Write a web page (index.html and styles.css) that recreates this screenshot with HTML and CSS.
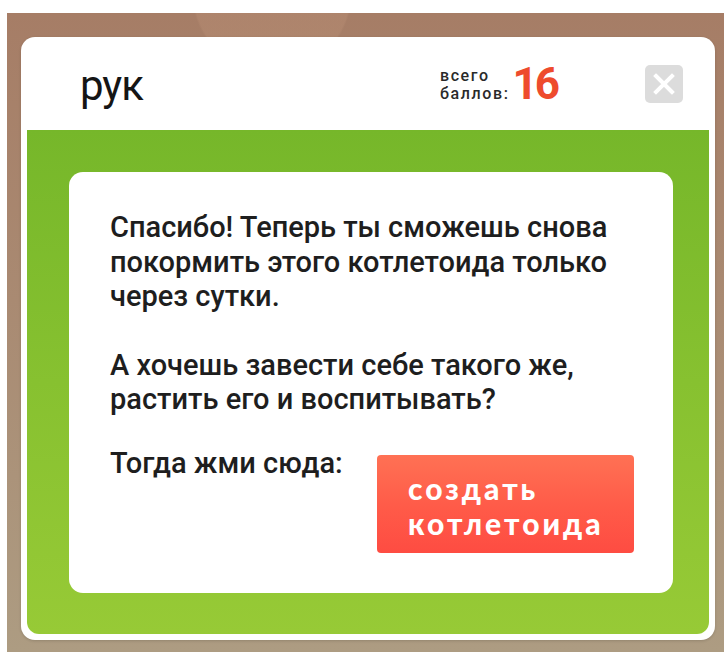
FILE: index.html
```html
<!DOCTYPE html>
<html lang="ru">
<head>
<meta charset="utf-8">
<title>рук</title>
<link rel="stylesheet" href="styles.css">
</head>
<body>
<div class="backdrop">
  <div class="modal">
    <header class="modal-head">
      <h1 class="name">рук</h1>
      <div class="score">
        <div class="score-label">
          <span class="score-line">всего</span>
          <span class="score-line">баллов:</span>
        </div>
        <span class="score-value">16</span>
      </div>
      <button class="close" type="button" aria-label="Закрыть">
        <svg viewBox="0 0 38 38" width="38" height="38"><path d="M11 11 L27 27 M27 11 L11 27" stroke="#fff" stroke-width="4" stroke-linecap="square"/></svg>
      </button>
    </header>
    <section class="panel">
      <div class="card">
        <p class="msg">Спасибо! Теперь ты сможешь снова<br>покормить этого котлетоида только<br>через сутки.</p>
        <p class="msg msg-last">А хочешь завести себе такого же,<br>растить его и воспитывать?</p>
        <div class="cta-row">
          <p class="msg">Тогда жми сюда:</p>
          <a class="create" href="#">создать<br>котлетоида</a>
        </div>
      </div>
    </section>
  </div>
</div>
</body>
</html>
```

FILE: styles.css
```css
html, body {
  margin: 0;
  padding: 0;
  background: #fff;
}

.backdrop {
  margin: 13px 0 0 7px;
  height: 639px;
  box-sizing: border-box;
  padding: 24px 9px 0 14px;
  background:
    radial-gradient(circle at 265px -20px, rgba(215,170,140,0.16) 0 78px, transparent 80px),
    linear-gradient(180deg, #a67d66 0%, #a98a72 45%, #ad9c82 100%);
  overflow: hidden;
}

.modal {
  width: 694px;
  height: 603px;
  background: #fff;
  border-radius: 14px;
  display: flex;
  flex-direction: column;
  box-shadow: 0 1px 3px rgba(0,0,0,0.15);
}

.modal-head {
  height: 93px;
  display: flex;
  align-items: center;
  padding: 0 32px 0 59px;
  font-family: Roboto, "Liberation Sans", sans-serif;
}

.name {
  margin: 0;
  padding-top: 4px;
  font-size: 42px;
  font-weight: 400;
  color: #151515;
  flex: 1;
  letter-spacing: -1px;
}

.score {
  display: flex;
  align-items: center;
  margin-right: 88px;
}

.score-label {
  display: flex;
  flex-direction: column;
}

.score-line {
  display: block;
  font-size: 16px;
  line-height: 19px;
  height: 18px;
  font-weight: 500;
  color: #2a2a2a;
  letter-spacing: 1.6px;
}

.score-value {
  font-size: 44px;
  font-weight: 700;
  color: #ee4b2d;
  letter-spacing: -3px;
  margin-left: 3px;
}

.close {
  width: 38px;
  height: 38px;
  padding: 0;
  border: 0;
  border-radius: 5px;
  background: #dcdcdc;
  display: flex;
  align-items: center;
  justify-content: center;
}

.panel {
  flex: 1;
  margin: 0 6px 6px;
  border-radius: 0 0 12px 12px;
  background: linear-gradient(180deg, #76b72a 0%, #87c130 50%, #97ca36 100%);
  padding: 42px 36px 41px 42px;
}

.card {
  background: #fff;
  border-radius: 14px;
  height: 421px;
  box-sizing: border-box;
  padding: 38px 20px 0 41px;
  font-family: Roboto, "Liberation Sans", sans-serif;
}

.msg {
  margin: 0 0 34px;
  font-size: 29px;
  line-height: 34.5px;
  font-weight: 500;
  color: #1e1e1e;
  letter-spacing: 0;
}

.msg-last {
  margin-bottom: 29px;
}

.cta-row {
  display: flex;
  align-items: flex-start;
  justify-content: space-between;
  padding-right: 19px;
}

.cta-row .msg {
  margin: 0;
}

.create {
  width: 257px;
  height: 98px;
  box-sizing: border-box;
  margin-top: 9px;
  padding: 16px 0 0 31px;
  border-radius: 4px;
  background: linear-gradient(180deg, #ff7154 0%, #ff5a48 55%, #fe4c42 100%);
  color: #fff;
  text-decoration: none;
  font-family: "Lato", "Liberation Sans", sans-serif;
  font-weight: 900;
  font-size: 30px;
  line-height: 35px;
  letter-spacing: 3px;
}
```
